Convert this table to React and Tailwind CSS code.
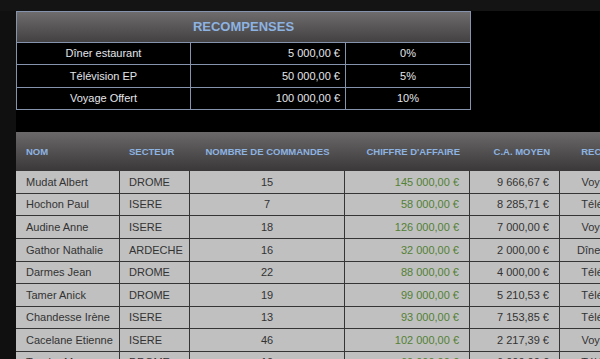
const rewards = [
  { label: "Dîner estaurant", amount: "5 000,00 €", rate: "0%" },
  { label: "Télévision EP", amount: "50 000,00 €", rate: "5%" },
  { label: "Voyage Offert", amount: "100 000,00 €", rate: "10%" },
];

const sellers = [
  ["Mudat Albert", "DROME", "15", "145 000,00 €", "9 666,67 €", "Voyage Offert"],
  ["Hochon Paul", "ISERE", "7", "58 000,00 €", "8 285,71 €", "Télévision EP"],
  ["Audine Anne", "ISERE", "18", "126 000,00 €", "7 000,00 €", "Voyage Offert"],
  ["Gathor Nathalie", "ARDECHE", "16", "32 000,00 €", "2 000,00 €", "Dîner estaurant"],
  ["Darmes Jean", "DROME", "22", "88 000,00 €", "4 000,00 €", "Télévision EP"],
  ["Tamer Anick", "DROME", "19", "99 000,00 €", "5 210,53 €", "Télévision EP"],
  ["Chandesse Irène", "ISERE", "13", "93 000,00 €", "7 153,85 €", "Télévision EP"],
  ["Cacelane Etienne", "ISERE", "46", "102 000,00 €", "2 217,39 €", "Voyage Offert"],
  ["Tessier Marc", "DROME", "10", "60 000,00 €", "6 000,00 €", "Télévision EP"],
];

function RewardsTable() {
  return (
    <div className="w-[455px] shrink-0 border border-[#8593ad]">
      <div className="flex h-[30px] items-center justify-center bg-gradient-to-b from-[#6e6c6c] to-[#434141] text-[13px] font-bold text-[#8db3e2]">
        RECOMPENSES
      </div>
      {rewards.map((r) => (
        <div
          key={r.label}
          className="flex h-[22.4px] border-t border-[#8593ad] bg-black text-[11px] text-[#e4e6ea]"
        >
          <div className="flex w-[174px] shrink-0 items-center justify-center border-r border-[#8593ad]">
            {r.label}
          </div>
          <div className="flex w-[155px] shrink-0 items-center justify-end border-r border-[#8593ad] pr-[5px]">
            {r.amount}
          </div>
          <div className="flex flex-1 items-center justify-center">{r.rate}</div>
        </div>
      ))}
    </div>
  );
}

function SalesTable() {
  const cell = "flex h-full shrink-0 items-center whitespace-nowrap border-r border-[#353535]";
  return (
    <div className="w-[700px] shrink-0">
      <div className="flex h-[39px] items-center whitespace-nowrap bg-gradient-to-b from-[#6b6969] to-[#3a3838] text-[9.5px] font-bold text-[#8db3e2]">
        <div className="w-[104px] shrink-0 pl-[10px]">NOM</div>
        <div className="w-[70px] shrink-0 pl-[9px]">SECTEUR</div>
        <div className="w-[155px] shrink-0 text-center">NOMBRE DE COMMANDES</div>
        <div className="w-[125px] shrink-0 pr-[10px] text-right">CHIFFRE D'AFFAIRE</div>
        <div className="w-[90px] shrink-0 pr-[10px] text-right">C.A. MOYEN</div>
        <div className="w-[110px] shrink-0 text-center">RECOMPENSE</div>
      </div>
      {sellers.map((s) => (
        <div
          key={s[0]}
          className="flex h-[22.6px] border-b border-[#353535] bg-[#c0c0c0] text-[11px] text-[#333]"
        >
          <div className={`${cell} w-[104px] pl-[10px]`}>{s[0]}</div>
          <div className={`${cell} w-[70px] pl-[9px]`}>{s[1]}</div>
          <div className={`${cell} w-[155px] justify-center`}>{s[2]}</div>
          <div className={`${cell} w-[125px] justify-end pr-[10px] text-[#538135]`}>{s[3]}</div>
          <div className={`${cell} w-[90px] justify-end pr-[10px]`}>{s[4]}</div>
          <div className="flex w-[110px] shrink-0 items-center justify-center whitespace-nowrap">{s[5]}</div>
        </div>
      ))}
    </div>
  );
}

export default function App() {
  return (
    <div
      className="flex h-[359px] w-[600px] flex-col overflow-hidden bg-[#111]"
      style={{ fontFamily: "'Liberation Sans', Arial, sans-serif" }}
    >
      <div className="h-[11px] shrink-0 bg-[#141414]" />
      <div className="flex min-h-0 flex-1">
        <div className="w-[16px] shrink-0 bg-[#101010]" />
        <div className="flex min-w-0 flex-1 flex-col items-start gap-[22px] overflow-hidden bg-black">
          <RewardsTable />
          <SalesTable />
        </div>
      </div>
    </div>
  );
}
